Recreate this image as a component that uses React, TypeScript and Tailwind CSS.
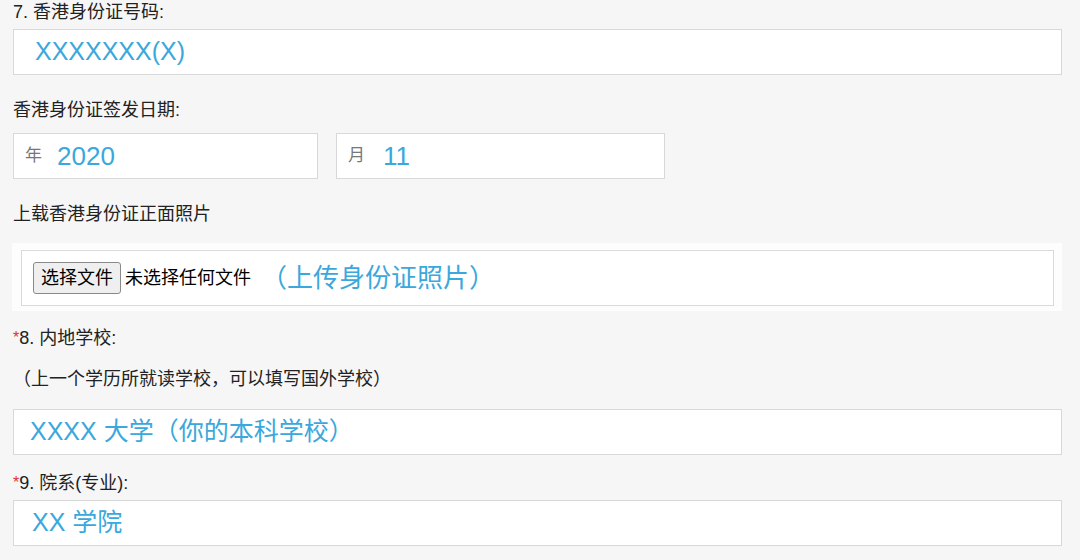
import React from "react";

const font = { fontFamily: '"Liberation Sans", "Noto Sans CJK SC", sans-serif' };

function Label({ children, required }: { children: React.ReactNode; required?: boolean }) {
  return (
    <div className="h-[24px] leading-[24px] text-[18px] text-[#222]">
      {required && <span className="text-[#e0332c] text-[16px] align-[1px]">*</span>}
      {children}
    </div>
  );
}

function Box({ children, className }: { children: React.ReactNode; className?: string }) {
  return (
    <div className={"h-[46px] bg-white border border-[#d8d8d8] flex items-center " + (className ?? "")}>
      {children}
    </div>
  );
}

export default function App() {
  return (
    <div className="w-[1080px] h-[560px] bg-[#f6f6f6] overflow-hidden px-[13px]" style={font}>
      <div className="w-[1049px]">
        <Label>7. 香港身份证号码:</Label>
        <Box className="mt-[5px] pl-[21px]">
          <span className="text-[25px] text-[#3aa8dc]">XXXXXXX(X)</span>
        </Box>

        <div className="mt-[23px]">
          <Label>香港身份证签发日期:</Label>
        </div>
        <div className="mt-[11px] flex gap-[18px]">
          <Box className="w-[305px] pl-[11px]">
            <span className="text-[17px] text-[#777]">年</span>
            <span className="ml-[15px] text-[26px] text-[#3aa8dc]">2020</span>
          </Box>
          <Box className="w-[329px] pl-[11px]">
            <span className="text-[17px] text-[#777]">月</span>
            <span className="ml-[18px] text-[26px] text-[#3aa8dc]">11</span>
          </Box>
        </div>

        <div className="mt-[23px]">
          <Label>上载香港身份证正面照片</Label>
        </div>
        <div className="mt-[17px] -ml-[1px] bg-[#fdfdfd] pt-[7px] pb-[5px] pl-[9px] pr-[8px]">
          <div className="h-[56px] bg-white border border-[#dadada] flex items-center pl-[11px]">
            <button className="h-[32px] px-[7px] text-[18px] leading-none text-black bg-[#efefef] border border-[#8a8a8a] rounded-[3px]">
              选择文件
            </button>
            <span className="ml-[4px] text-[18px] text-black">未选择任何文件</span>
            <span className="ml-[10px] text-[26px] text-[#3aa8dc]">（上传身份证照片）</span>
          </div>
        </div>

        <div className="mt-[15px]">
          <Label required>8. 内地学校:</Label>
        </div>
        <div className="mt-[17px]">
          <Label>（上一个学历所就读学校，可以填写国外学校）</Label>
        </div>
        <Box className="mt-[18px] pl-[16px]">
          <span className="text-[25px] text-[#3aa8dc]">XXXX 大学（你的本科学校）</span>
        </Box>

        <div className="mt-[16px]">
          <Label required>9. 院系(专业):</Label>
        </div>
        <Box className="mt-[5px] pl-[18px]">
          <span className="text-[25px] text-[#3aa8dc]">XX 学院</span>
        </Box>
      </div>
    </div>
  );
}
